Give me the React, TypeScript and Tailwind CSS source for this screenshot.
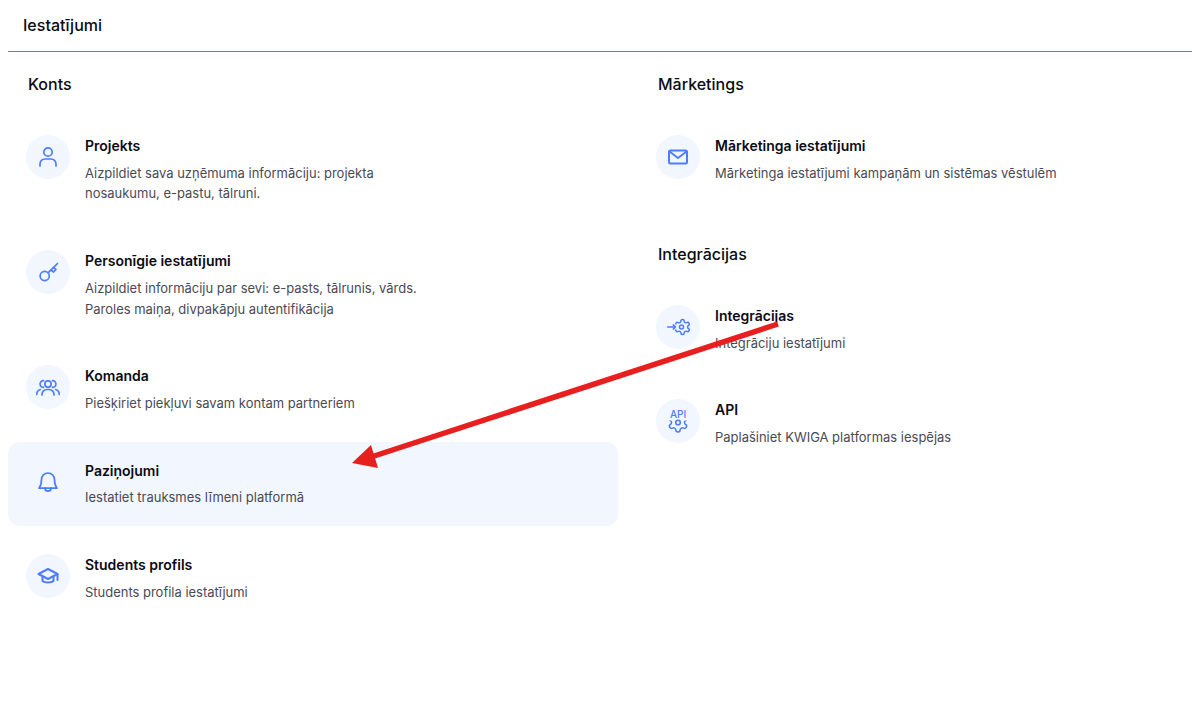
import type { ReactNode } from "react";

const blue = "#4d7cfe";

const gearPath =
  "M12.22 2h-.44a2 2 0 0 0-2 2v.18a2 2 0 0 1-1 1.73l-.43.25a2 2 0 0 1-2 0l-.15-.08a2 2 0 0 0-2.73.73l-.22.38a2 2 0 0 0 .73 2.73l.15.1a2 2 0 0 1 1 1.72v.51a2 2 0 0 1-1 1.74l-.15.09a2 2 0 0 0-.73 2.73l.22.38a2 2 0 0 0 2.73.73l.15-.08a2 2 0 0 1 2 0l.43.25a2 2 0 0 1 1 1.73V20a2 2 0 0 0 2 2h.44a2 2 0 0 0 2-2v-.18a2 2 0 0 1 1-1.73l.43-.25a2 2 0 0 1 2 0l.15.08a2 2 0 0 0 2.73-.73l.22-.39a2 2 0 0 0-.73-2.73l-.15-.08a2 2 0 0 1-1-1.74v-.5a2 2 0 0 1 1-1.74l.15-.09a2 2 0 0 0 .73-2.73l-.22-.38a2 2 0 0 0-2.73-.73l-.15.08a2 2 0 0 1-2 0l-.43-.25a2 2 0 0 1-1-1.73V4a2 2 0 0 0-2-2z";

const Icon = ({ children }: { children: ReactNode }) => (
  <svg
    width="24"
    height="24"
    viewBox="0 0 24 24"
    fill="none"
    stroke={blue}
    strokeWidth="1.7"
    strokeLinecap="round"
    strokeLinejoin="round"
  >
    {children}
  </svg>
);

const UserIcon = () => (
  <Icon>
    <circle cx="12" cy="7" r="4.2" />
    <path d="M4 21v-2a5 5 0 0 1 5-5h6a5 5 0 0 1 5 5v2" />
  </Icon>
);

const KeyIcon = () => (
  <Icon>
    <circle cx="8.7" cy="16" r="4.6" />
    <path d="M12 12.8 21.5 3.5" />
    <path d="M15 10l2.5 2 2.5-2.5-2.5-2" />
  </Icon>
);

const TeamIcon = () => (
  <Icon>
    <circle cx="12" cy="9" r="3.2" />
    <path d="M6 20v-.5a5 5 0 0 1 5-5h2a5 5 0 0 1 5 5v.5" />
    <path d="M7.5 5.6a3.4 3.4 0 0 0 0 6.8" />
    <path d="M16.5 5.6a3.4 3.4 0 0 1 0 6.8" />
    <path d="M.8 19.500a5 5 0 0 1 3.5-5" />
    <path d="M23.2 19.500a5 5 0 0 0-3.5-5" />
  </Icon>
);

const BellIcon = () => (
  <Icon>
    <path d="M5.5 9.5a6.5 6.5 0 0 1 13 0c0 4 .8 6.500 2.500 8.700H3c1.700-2.200 2.500-4.700 2.500-8.700z" />
    <path d="M9 18.200a3 3 0 0 0 6 0" />
  </Icon>
);

const CapIcon = () => (
  <Icon>
    <path d="M12 5 2.500 10 12 15l9.500-5z" strokeWidth="2" />
    <path d="M6.500 12.500V17c2 2 9 2 11 0v-4.500" strokeWidth="2" />
    <path d="M21.500 10v6" strokeWidth="2" />
  </Icon>
);

const MailIcon = () => (
  <Icon>
    <rect x="3" y="5.500" width="18" height="13" rx="1.500" strokeWidth="2" />
    <path d="M3.500 6.500 12 13l8.500-6.500" strokeWidth="1.800" />
  </Icon>
);

const IntegrationIcon = () => (
  <Icon>
    <path d="M1.700 12H9.500M7.300 9.900 9.500 12l-2.200 2.100" strokeWidth="1.500" />
    <clipPath id="integrationGear">
      <rect x="0" y="0" width="24" height="9.500" />
      <rect x="0" y="14.500" width="24" height="9.500" />
      <rect x="12" y="0" width="12" height="24" />
    </clipPath>
    <g clipPath="url(#integrationGear)">
      <g transform="translate(7.500 3) scale(.75)" strokeWidth="2">
        <path d={gearPath} />
      </g>
    </g>
    <circle cx="15.500" cy="12" r="2" strokeWidth="1.500" />
  </Icon>
);

const ApiIcon = () => (
  <svg width="26" height="32" viewBox="0 0 26 32" fill="none" stroke={blue} strokeWidth="1.600" strokeLinecap="round" strokeLinejoin="round">
    <text x="13" y="13" textAnchor="middle" fill={blue} stroke="none" fontSize="10" fontWeight="500" fontFamily="Inter, sans-serif">
      API
    </text>
    <clipPath id="apiGear">
      <rect x="0" y="15.500" width="26" height="18" />
    </clipPath>
    <g clipPath="url(#apiGear)">
      <g transform="translate(1.600 6.100) scale(.95)">
        <path d={gearPath} />
      </g>
    </g>
    <circle cx="13" cy="17.500" r="2.300" />
  </svg>
);

type Item = { icon: ReactNode; title: string; text: string; active?: boolean };

const account: Item[] = [
  {
    icon: <UserIcon />,
    title: "Projekts",
    text: "Aizpildiet sava uzņēmuma informāciju: projekta nosaukumu, e-pastu, tālruni.",
  },
  {
    icon: <KeyIcon />,
    title: "Personīgie iestatījumi",
    text: "Aizpildiet informāciju par sevi: e-pasts, tālrunis, vārds. Paroles maiņa, divpakāpju autentifikācija",
  },
  { icon: <TeamIcon />, title: "Komanda", text: "Piešķiriet piekļuvi savam kontam partneriem" },
  { icon: <BellIcon />, title: "Paziņojumi", text: "Iestatiet trauksmes līmeni platformā", active: true },
  { icon: <CapIcon />, title: "Students profils", text: "Students profila iestatījumi" },
];

const marketing: Item[] = [
  {
    icon: <MailIcon />,
    title: "Mārketinga iestatījumi",
    text: "Mārketinga iestatījumi kampaņām un sistēmas vēstulēm",
  },
];

const integrations: Item[] = [
  { icon: <IntegrationIcon />, title: "Integrācijas", text: "Integrāciju iestatījumi" },
  { icon: <ApiIcon />, title: "API", text: "Paplašiniet KWIGA platformas iespējas" },
];

const Row = ({ item }: { item: Item }) => (
  <a className={`flex gap-[15px] rounded-xl py-[18px] pl-[18px] pr-4 ${item.active ? "bg-[#f1f6ff]" : ""}`}>
    <div className="flex h-11 w-11 shrink-0 items-center justify-center rounded-full bg-[#f1f6ff]">
      {item.icon}
    </div>
    <div>
      <h3 className="text-sm leading-[22.4px] font-semibold text-[#0b0b14]">{item.title}</h3>
      <p className="mt-[5.2px] max-w-[350px] text-[12.97px] leading-[20.8px] text-[#4a4a55]">{item.text}</p>
    </div>
  </a>
);

const Section = ({ title, items }: { title: string; items: Item[] }) => (
  <section>
    <h2 className="mb-[21px] pl-5 text-base leading-6 font-medium text-[#0b0b14]">{title}</h2>
    <div className="flex flex-col gap-[10px]">
      {items.map((item) => (
        <Row key={item.title} item={item} />
      ))}
    </div>
  </section>
);

const Arrow = () => (
  <svg className="pointer-events-none absolute top-0 left-0" width="1192" height="703">
    <line x1="778" y1="324" x2="368" y2="458" stroke="#e71f1f" strokeWidth="5.500" />
    <polygon points="352,463 371,445 378,468" fill="#e71f1f" />
  </svg>
);

const App = () => {
  return (
    <div className="relative h-[703px] w-[1192px] overflow-hidden bg-white font-['Inter',sans-serif]">
      <div className="ml-2 flex h-[52px] items-center border-b border-[#5b7cf0] pb-[2px] pl-[15px]">
        <h1 className="text-base font-medium text-[#0b0b14]">Iestatījumi</h1>
      </div>
      <div className="grid grid-cols-[610px_1fr] gap-5 pt-5 pl-2">
        <Section title="Konts" items={account} />
        <div className="flex flex-col gap-[40.6px]">
          <Section title="Mārketings" items={marketing} />
          <Section title="Integrācijas" items={integrations} />
        </div>
      </div>
      <Arrow />
    </div>
  );
};

export default App;
